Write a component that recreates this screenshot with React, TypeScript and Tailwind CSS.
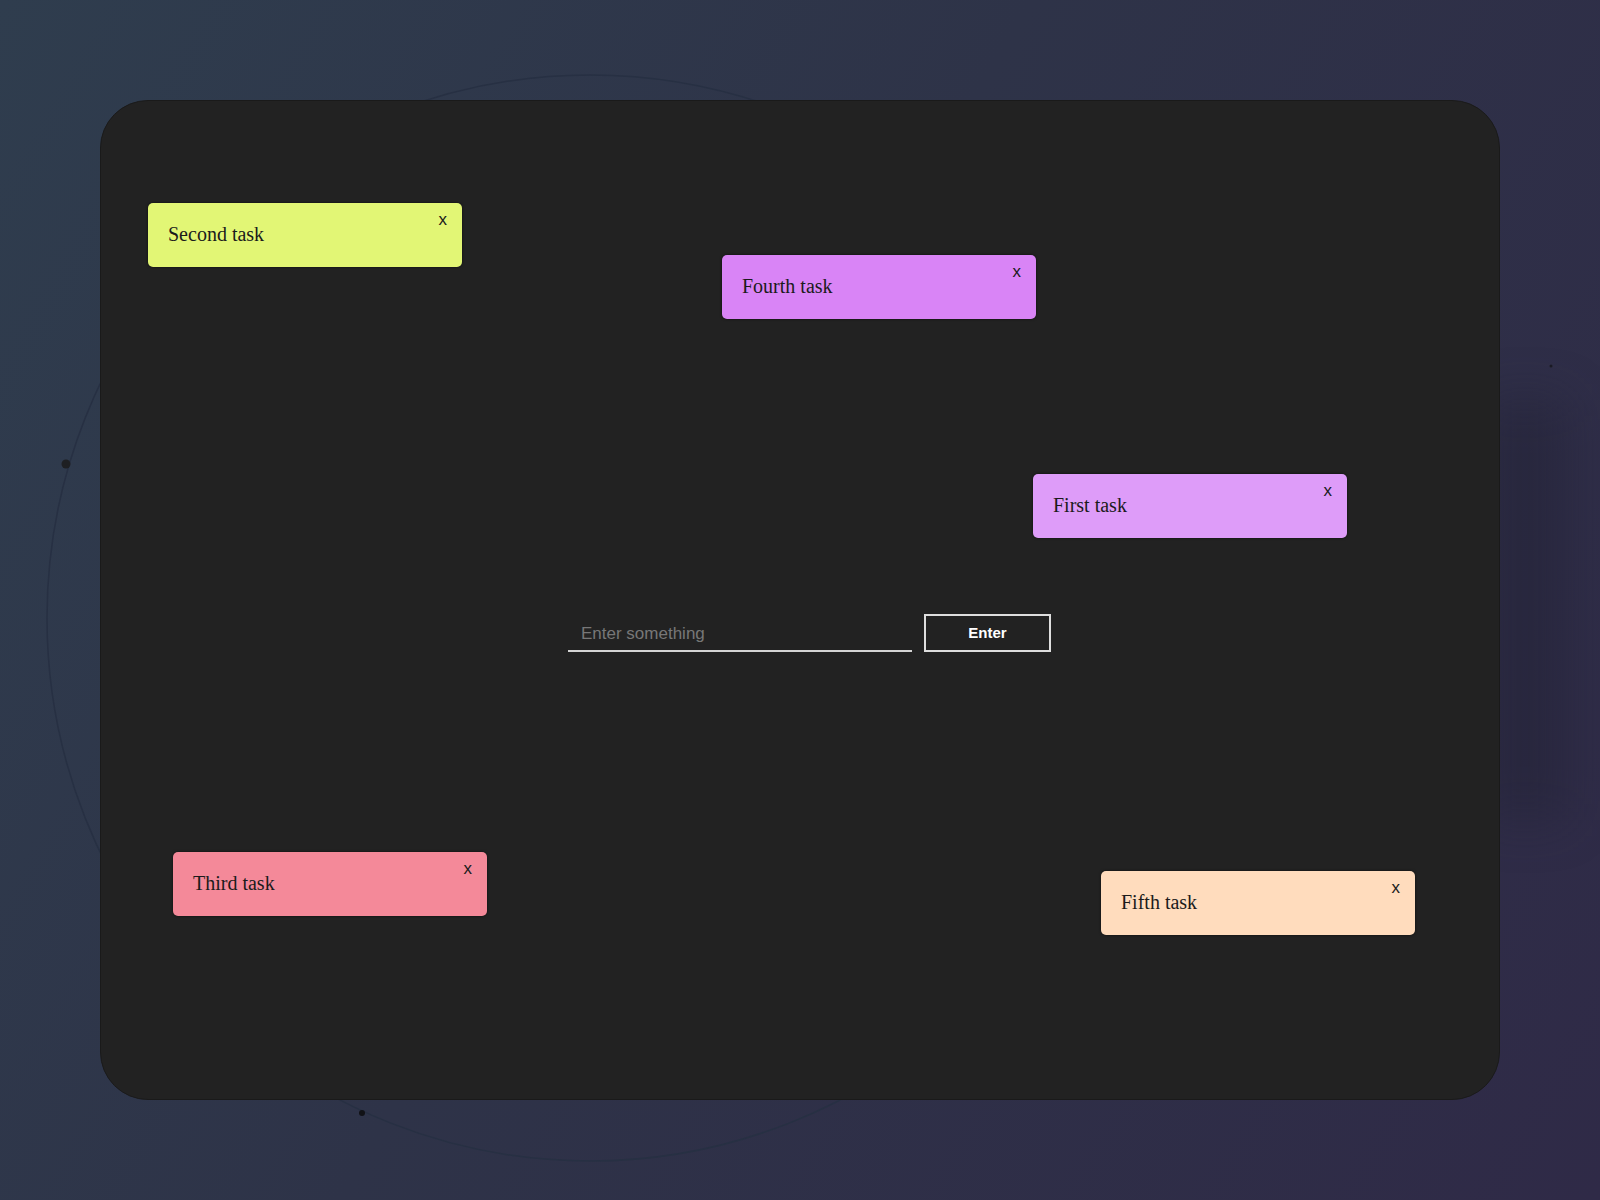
import React, { useState } from 'react';

type Note = {
  id: number;
  text: string;
  color: string;
  pos: string;
};

const initialNotes: Note[] = [
  { id: 2, text: 'Second task', color: 'bg-[#e2f675]', pos: 'left-[47px] top-[102px]' },
  { id: 4, text: 'Fourth task', color: 'bg-[#d984f6]', pos: 'left-[621px] top-[154px]' },
  { id: 1, text: 'First task', color: 'bg-[#de9cf9]', pos: 'left-[932px] top-[373px]' },
  { id: 3, text: 'Third task', color: 'bg-[#f48999]', pos: 'left-[72px] top-[751px]' },
  { id: 5, text: 'Fifth task', color: 'bg-[#ffdcbd]', pos: 'left-[1000px] top-[770px]' }
];

function StickyNote({ note, onRemove }: { note: Note; onRemove: (id: number) => void }) {
  return (
    <div
      className={`absolute ${note.pos} ${note.color} flex h-[64px] w-[314px] items-center rounded-[5px] pb-[2px] pl-[20px] shadow-[0_0_3px_rgba(0,0,0,0.6)]`}
    >
      <span className="font-['Liberation_Serif',serif] text-[20px] text-[#1b1b1b]">{note.text}</span>
      <button
        onClick={() => onRemove(note.id)}
        className="absolute right-[15px] top-[8px] font-['Liberation_Sans',Arial,sans-serif] text-[17px] leading-none text-[#1b1b1b]"
      >
        x
      </button>
    </div>
  );
}

export default function App() {
  const [notes, setNotes] = useState<Note[]>(initialNotes);
  const [value, setValue] = useState('');

  const removeNote = (id: number) => setNotes(notes.filter((n) => n.id !== id));

  const handleSubmit = (e: React.FormEvent) => {
    e.preventDefault();
    if (!value.trim()) return;
    setNotes([
      ...notes,
      { id: Date.now(), text: value, color: 'bg-[#e2f675]', pos: 'left-[540px] top-[420px]' }
    ]);
    setValue('');
  };

  return (
    <div className="relative h-[1200px] w-full overflow-hidden bg-[linear-gradient(120deg,#2f3d4e_0%,#2e3348_45%,#2f2a47_100%)] pt-[100px]">
      {/* decorative ring */}
      <svg className="absolute left-0 top-0" width="1600" height="1200">
        <circle cx="590" cy="618" r="543" fill="none" stroke="#273043" strokeWidth="1.5" />
        <circle cx="66" cy="464" r="4.5" fill="#1e1f22" />
        <circle cx="362" cy="1113" r="3" fill="#111216" />
        <circle cx="1551" cy="366" r="1.5" fill="#1a1a24" />
      </svg>
      <div className="absolute left-[1485px] top-[400px] h-[420px] w-[80px] bg-[#1f1d30]/40 blur-xl" />

      {/* board */}
      <div className="relative mx-auto h-[1000px] w-[1400px] rounded-[48px] border border-[#1a1a1a] bg-[#222222] pl-[467px] pt-[513px]">
        <form onSubmit={handleSubmit} className="flex items-end gap-[12px]">
          <input
            value={value}
            onChange={(e) => setValue(e.target.value)}
            placeholder="Enter something"
            className="h-[38px] w-[344px] border-b-2 border-[#d4d4d4] bg-transparent pl-[13px] pt-[3px] font-['Liberation_Sans',Arial,sans-serif] text-[17px] text-white outline-none placeholder:text-[#777777]"
          />
          <button
            type="submit"
            className="h-[38px] w-[127px] border-2 border-[#dedede] font-['Liberation_Sans',Arial,sans-serif] text-[15px] font-bold text-white"
          >
            Enter
          </button>
        </form>

        {notes.map((note) => (
          <StickyNote key={note.id} note={note} onRemove={removeNote} />
        ))}
      </div>
    </div>
  );
}
